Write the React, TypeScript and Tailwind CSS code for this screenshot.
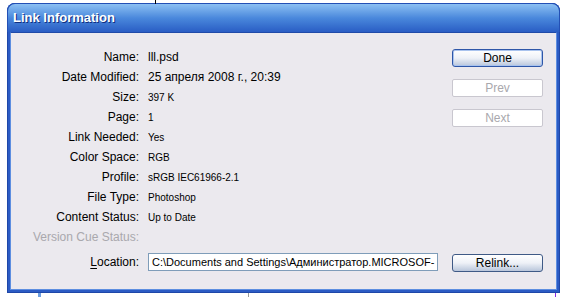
import React from "react";

const rows: { label: string; value: string; big?: boolean; disabled?: boolean }[] = [
  { label: "Name:", value: "lll.psd", big: true },
  { label: "Date Modified:", value: "25 апреля 2008 г., 20:39", big: true },
  { label: "Size:", value: "397 K" },
  { label: "Page:", value: "1" },
  { label: "Link Needed:", value: "Yes" },
  { label: "Color Space:", value: "RGB" },
  { label: "Profile:", value: "sRGB IEC61966-2.1" },
  { label: "File Type:", value: "Photoshop" },
  { label: "Content Status:", value: "Up to Date" },
  { label: "Version Cue Status:", value: "", disabled: true },
];

function XpButton({ children, primary }: { children: React.ReactNode; primary?: boolean }) {
  return (
    <button
      className={`h-[18px] w-[91px] rounded-[3px] border text-[12px] leading-none text-black bg-gradient-to-b from-white via-[#eef1f7] to-[#b9c6db] ${
        primary ? "border-[#2e56a8] shadow-[inset_0_0_0_1px_#a9c3ee]" : "border-[#3f5a86]"
      }`}
    >
      {children}
    </button>
  );
}

function DisabledButton({ children }: { children: React.ReactNode }) {
  return (
    <button className="h-[18px] w-[91px] rounded-[2px] border border-[#c9c7cf] bg-white text-[12px] leading-none text-[#a9a8ad]">
      {children}
    </button>
  );
}

export default function App() {
  return (
    <div className="relative w-[565px] h-[297px] bg-white overflow-hidden" style={{ fontFamily: '"Liberation Sans", Arial, sans-serif' }}>
      {/* stray background bits */}
      <div className="absolute left-[155px] top-0 h-[4px] w-px bg-black" />
      <div className="absolute left-[38px] top-[293px] h-[4px] w-[3px] bg-[#6f9fe0]" />
      <div className="absolute left-[248px] top-[293px] h-[4px] w-px bg-[#9a9a9a]" />
      <div className="absolute left-[555px] top-[293px] h-[4px] w-px bg-[#8a2be2]" />

      {/* window */}
      <div className="ml-[7px] mt-[3px] w-[553px] h-[290px] flex flex-col rounded-t-[8px] bg-[#2b5bc4] px-[3px] pb-[3px] shadow-[inset_0_0_0_1px_#1e47a8]">
        {/* title bar */}
        <div className="-mx-[3px] h-[29px] shrink-0 rounded-t-[8px] border border-[#2350b5] border-b-0 bg-gradient-to-b from-[#8cc0f2] via-[#4a88dc] to-[#2a5dc4] flex items-center pl-[5px]">
          <span
            className="text-[13px] font-bold text-white"
            style={{ textShadow: "1px 1px 0 #0f2f80" }}
          >
            Link Information
          </span>
        </div>

        {/* body */}
        <div className="flex-1 border border-[#5d8ee0] border-t-[#1f4aa8] bg-[#ebe9ee] flex flex-col">
          <div className="flex pt-[14px]">
            <div className="grid grid-cols-[128px_1fr] gap-x-[9px] w-[441px]">
              {rows.map((r) => (
                <React.Fragment key={r.label}>
                  <div className={`h-[20px] flex items-center justify-end text-[12px] ${r.disabled ? "text-[#a9a8ad]" : "text-black"}`}>
                    {r.label}
                  </div>
                  <div className={`h-[20px] flex items-center text-black ${r.big ? "text-[12px]" : "text-[10px]"}`}>
                    {r.value}
                  </div>
                </React.Fragment>
              ))}
            </div>
            <div className="flex flex-col gap-[12px] pt-[2px]">
              <XpButton primary>Done</XpButton>
              <DisabledButton>Prev</DisabledButton>
              <DisabledButton>Next</DisabledButton>
            </div>
          </div>

          <div className="flex items-center mt-[3px]">
            <div className="w-[128px] text-right text-[12px] text-black">
              <span className="underline underline-offset-2">L</span>ocation:
            </div>
            <div className="ml-[9px] h-[18px] w-[290px] border border-[#7f9db9] bg-white flex items-center px-[3px] text-[11px] text-black overflow-hidden whitespace-nowrap">
              C:\Documents and Settings\Администратор.MICROSOF-
            </div>
            <div className="ml-[14px]">
              <XpButton>Relink...</XpButton>
            </div>
          </div>
        </div>
      </div>
    </div>
  );
}
